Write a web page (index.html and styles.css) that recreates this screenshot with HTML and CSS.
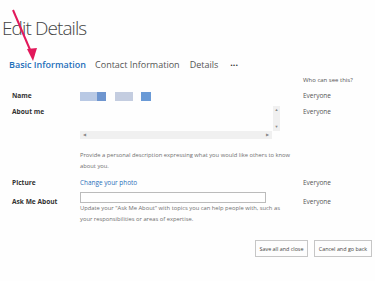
FILE: index.html
```html
<!DOCTYPE html>
<html lang="en">
<head>
  <meta charset="UTF-8" />
  <title>Edit Details</title>
  <link rel="stylesheet" href="styles.css">
</head>
<body>

  <h1 class="title">Edit Details</h1>

  <div class="tabs">
    <span class="tab active">Basic Information</span>
    <span class="tab">Contact Information</span>
    <span class="tab">Details</span>
    <span class="tab more">&middot;&middot;&middot;</span>
  </div>

  <!-- red annotation arrow over the first tab -->
  <svg class="arrow" width="40" height="64" viewBox="0 0 40 64">
    <line x1="13" y1="10" x2="31" y2="52" stroke="#e2195b" stroke-width="2" />
    <polygon points="27,49 37,48 33,61" fill="#e2195b" />
  </svg>

  <div class="form">
    <div></div>
    <div></div>
    <div class="who head">Who can see this?</div>

    <div class="label">Name</div>
    <div class="name">
      <span class="blk b1"></span><span class="blk b2"></span>
      <span class="blk b3"></span>
      <span class="blk b4"></span>
    </div>
    <div class="who">Everyone</div>

    <div class="label">About me</div>
    <div class="about">
      <div class="area">
        <div class="vscroll"><span>&#9650;</span><span>&#9660;</span></div>
      </div>
      <div class="hscroll"><span>&#9664;</span><span>&#9654;</span></div>
      <p class="hint">Provide a personal description expressing what you would like others to know about you.</p>
    </div>
    <div class="who">Everyone</div>

    <div class="label">Picture</div>
    <div><a class="link">Change your photo</a></div>
    <div class="who">Everyone</div>

    <div class="label ask">Ask Me About</div>
    <div class="ask">
      <div class="input"></div>
      <p class="hint short">Update your "Ask Me About" with topics you can help people with, such as your responsibilities or areas of expertise.</p>
    </div>
    <div class="who ask">Everyone</div>
  </div>

  <div class="buttons">
    <button class="save">Save all and close</button>
    <button class="cancel">Cancel and go back</button>
  </div>

</body>
</html>
```

FILE: styles.css
```css
body {
  margin: 0;
  background: #fefefe;
  color: #444;
  font-family: "Open Sans", sans-serif;
  width: 375px;
  height: 281px;
  overflow: hidden;
  position: relative;
}

.title {
  margin: 0;
  padding: 14px 0 0 2px;
  font-size: 19px;
  font-weight: 300;
  color: #444;
  line-height: 28px;
  letter-spacing: -0.9px;
}

.tabs {
  display: flex;
  gap: 10px;
  padding: 16px 0 0 9px;
  font-size: 9px;
  line-height: 14px;
  color: #555;
}

.tab.active {
  color: #1f6fba;
  font-weight: 600;
  margin-right: -1px;
}

.tab.more {
  font-weight: 700;
  color: #333;
  margin-left: 2px;
}

.arrow {
  position: absolute;
  left: 0;
  top: 0;
}

.form {
  display: grid;
  grid-template-columns: 68px 223px auto;
  padding: 3px 0 0 12px;
  font-size: 7px;
  line-height: 10px;
  row-gap: 6px;
}

.label {
  font-weight: 700;
  font-size: 6.6px;
  color: #333;
}

.who {
  color: #555;
  font-size: 6.5px;
}

.who.head {
  font-size: 6px;
}

.ask {
  margin-top: 3px;
}

.name {
  display: flex;
  align-items: center;
  height: 10px;
}

.blk {
  display: inline-block;
  height: 9px;
}
.b1 { width: 17px; background: #b9c9e4; }
.b2 { width: 9px; background: #6e95cf; margin-right: 9px; }
.b3 { width: 18px; background: #c4cde0; margin-right: 8px; }
.b4 { width: 10px; background: #6a9ad6; }

.about {
  width: 200px;
}

.area {
  height: 28px;
  display: flex;
  justify-content: flex-end;
  margin-top: -4px;
}

.vscroll {
  width: 7px;
  margin-top: 3px;
  background: #f0f0f0;
  display: flex;
  flex-direction: column;
  justify-content: space-between;
  align-items: center;
  font-size: 4px;
  line-height: 8px;
  color: #888;
}

.hscroll {
  width: 192px;
  height: 8px;
  background: #f0f0f0;
  display: flex;
  justify-content: space-between;
  align-items: center;
  font-size: 4px;
  padding: 0 3px;
  box-sizing: border-box;
  color: #888;
}

.hint {
  width: 215px;
  margin: 11px 0 0;
  font-size: 5.8px;
  line-height: 11px;
  color: #6f6f6f;
}

.hint.short {
  width: 200px;
}

.link {
  color: #1f6fba;
  font-size: 6.4px;
}

.input {
  width: 186px;
  height: 11px;
  border: 1px solid #bbb;
  box-sizing: border-box;
  margin-top: -5px;
}

.input + .hint {
  margin-top: 0;
}

.buttons {
  display: flex;
  justify-content: flex-end;
  gap: 6px;
  padding: 15px 3px 0 0;
}

.buttons button {
  font-family: "Open Sans", sans-serif;
  font-size: 5.4px;
  color: #444;
  background: #fdfdfd;
  border: 1px solid #c6c6c6;
  height: 17px;
  padding: 0;
}

.buttons .save {
  width: 53px;
}

.buttons .cancel {
  width: 58px;
}
```
